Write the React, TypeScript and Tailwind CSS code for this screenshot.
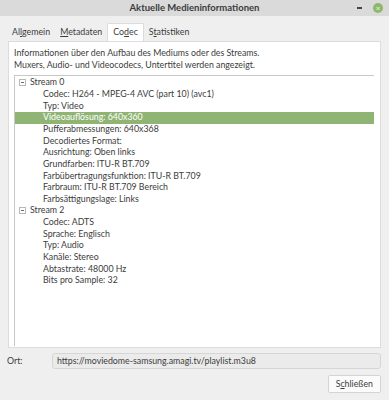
import React from 'react';

const stream0 = [
  'Codec: H264 - MPEG-4 AVC (part 10) (avc1)',
  'Typ: Video',
  'Videoauflösung: 640x360',
  'Pufferabmessungen: 640x368',
  'Decodiertes Format:',
  'Ausrichtung: Oben links',
  'Grundfarben: ITU-R BT.709',
  'Farbübertragungsfunktion: ITU-R BT.709',
  'Farbraum: ITU-R BT.709 Bereich',
  'Farbsättigungslage: Links',
];

const stream2 = [
  'Codec: ADTS',
  'Sprache: Englisch',
  'Typ: Audio',
  'Kanäle: Stereo',
  'Abtastrate: 48000 Hz',
  'Bits pro Sample: 32',
];

function Expander() {
  return (
    <span className="w-[7px] h-[7px] border border-[#b8b8b8] bg-white flex items-center justify-center mr-[4px]">
      <span className="w-[3px] h-px bg-[#707070]" />
    </span>
  );
}

function StreamNode({ name, items, selected }: { name: string; items: string[]; selected?: string }) {
  return (
    <div>
      <div className="h-[11.65px] flex items-center pl-[4px]">
        <Expander />
        <span>{name}</span>
      </div>
      {items.map((item) => (
        <div
          key={item}
          className={
            item === selected
              ? 'h-[11.65px] flex items-center pl-[28px] bg-[#8fb474] text-white'
              : 'h-[11.65px] flex items-center pl-[28px]'
          }
        >
          {item}
        </div>
      ))}
    </div>
  );
}

function Tab({ label, active }: { label: React.ReactNode; active?: boolean }) {
  if (active) {
    return (
      <div className="h-[18px] px-[5px] bg-white border border-b-0 border-[#dcdcdc] rounded-t-[2px] flex items-center">
        {label}
      </div>
    );
  }
  return <div className="h-[18px] px-[5px] flex items-center">{label}</div>;
}

export default function App() {
  return (
    <div
      className="w-[389px] h-[400px] bg-[#efefef] flex flex-col text-[#3c3c3c] text-[8.8px] leading-none"
      style={{ fontFamily: 'Lato, "Noto Sans", sans-serif' }}
    >
      {/* title bar */}
      <div className="h-[16px] bg-[#dadada] relative flex items-center justify-center shrink-0">
        <span className="font-bold text-[9.5px] text-[#3a3a3a]">Aktuelle Medieninformationen</span>
        <span className="absolute left-[357px] top-[7px] w-[5px] h-[1.5px] bg-[#444]" />
        <span className="absolute left-[373px] top-[3px] w-[10px] h-[10px] rounded-full bg-[#8cb86c] flex items-center justify-center text-[#d9ecc9] text-[8px] font-bold">
          ×
        </span>
      </div>

      {/* tabs */}
      <div className="flex items-end pl-[7px] mt-[7px] h-[18px] shrink-0">
        <Tab label={<span>Al<u>l</u>gemein</span>} />
        <Tab label={<span><u>M</u>etadaten</span>} />
        <Tab label={<span>Co<u>d</u>ec</span>} active />
        <Tab label={<span>S<u>t</u>atistiken</span>} />
      </div>

      {/* page */}
      <div className="mx-[8px] h-[307px] bg-white border border-[#dcdcdc] flex flex-col shrink-0">
        <div className="px-[5px] pt-[5px] leading-[12px]">
          <div>Informationen über den Aufbau des Mediums oder des Streams.</div>
          <div>Muxers, Audio- und Videocodecs, Untertitel werden angezeigt.</div>
        </div>
        <div className="ml-[5px] mr-[6px] mt-[4px] h-[271px] border-l border-t border-[#c8c8c8] pt-[1px]">
          <StreamNode name="Stream 0" items={stream0} selected="Videoauflösung: 640x360" />
          <StreamNode name="Stream 2" items={stream2} />
        </div>
      </div>

      {/* location */}
      <div className="flex items-center mt-[5px] h-[16px] pl-[7px] pr-[8px]">
        <span className="w-[45px]">Ort:</span>
        <div className="flex-1 h-[16px] bg-[#ebebeb] border border-[#d6d6d6] rounded-[3px] flex items-center px-[4px]">
          https://moviedome-samsung.amagi.tv/playlist.m3u8
        </div>
      </div>

      <div className="flex justify-end pr-[8px] mt-[6px]">
        <button className="h-[18px] px-[7px] bg-[#fbfbfb] border border-[#d4d4d4] rounded-[2px] text-[8.8px] text-[#3c3c3c]">
          S<u>c</u>hließen
        </button>
      </div>
    </div>
  );
}
